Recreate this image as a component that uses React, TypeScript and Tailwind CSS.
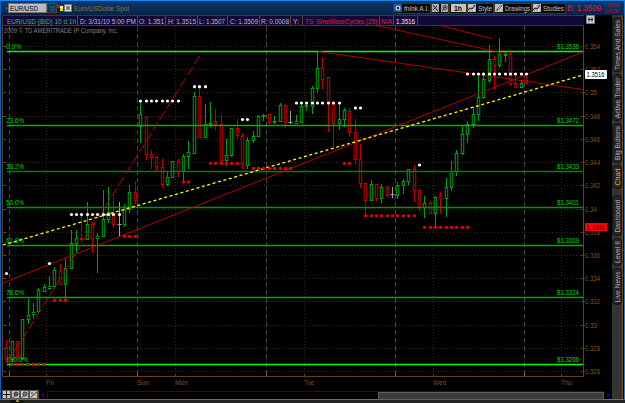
import type { ReactNode } from "react";
import clsx from "clsx";

type Kind = "g" | "r" | "w";

// kind, high, body top, body bottom, low
type Candle = [Kind, number, number, number, number];

const candles: Candle[] = [
  ["r", 340, 347, 359, 363],
  ["g", 341, 341, 359, 362],
  ["r", 341, 341, 357, 361],
  ["g", 319, 319, 358, 360],
  ["g", 299, 315, 319, 324],
  ["g", 303, 312, 314, 319],
  ["g", 288, 290, 311, 313],
  ["g", 284, 287, 291, 292],
  ["g", 276, 286, 288, 290],
  ["g", 267, 270, 286, 289],
  ["r", 264, 271, 284, 285],
  ["g", 258, 268, 284, 299],
  ["g", 230, 243, 268, 269],
  ["g", 230, 238, 243, 253],
  ["r", 216, 238, 239, 242],
  ["g", 202, 224, 239, 240],
  ["r", 222, 224, 238, 253],
  ["g", 233, 236, 238, 273],
  ["g", 190, 219, 236, 237],
  ["g", 187, 212, 219, 223],
  ["r", 197, 213, 224, 228],
  ["w", 202, 224, 224, 237],
  ["g", 204, 209, 224, 227],
  ["g", 185, 192, 209, 213],
  ["r", 181, 192, 200, 204],
  ["g", 102, 114, 126, 143],
  ["r", 117, 117, 154, 160],
  ["r", 150, 154, 157, 169],
  ["r", 156, 157, 166, 171],
  ["r", 159, 167, 184, 188],
  ["g", 171, 177, 184, 186],
  ["g", 161, 161, 177, 178],
  ["r", 159, 161, 171, 177],
  ["g", 154, 156, 171, 182],
  ["g", 141, 152, 156, 169],
  ["g", 92, 96, 153, 154],
  ["r", 87, 96, 137, 138],
  ["g", 104, 124, 137, 138],
  ["g", 102, 123, 124, 127],
  ["r", 109, 121, 124, 130],
  ["r", 115, 124, 160, 163],
  ["g", 139, 155, 160, 166],
  ["g", 128, 128, 155, 157],
  ["r", 119, 128, 135, 140],
  ["r", 133, 136, 163, 169],
  ["g", 137, 140, 165, 169],
  ["g", 131, 136, 140, 143],
  ["g", 115, 116, 136, 137],
  ["g", 114, 115, 116, 121],
  ["r", 114, 114, 122, 124],
  ["g", 116, 121, 122, 124],
  ["g", 103, 105, 121, 122],
  ["r", 104, 105, 122, 128],
  ["w", 111, 122, 122, 124],
  ["g", 115, 121, 123, 124],
  ["g", 104, 106, 122, 123],
  ["g", 102, 105, 106, 111],
  ["g", 86, 88, 106, 114],
  ["g", 51, 68, 88, 93],
  ["r", 58, 68, 79, 89],
  ["r", 77, 77, 103, 132],
  ["r", 103, 103, 123, 148],
  ["g", 103, 119, 123, 130],
  ["g", 108, 110, 119, 127],
  ["r", 108, 111, 132, 137],
  ["r", 119, 132, 159, 164],
  ["r", 144, 159, 183, 188],
  ["r", 183, 183, 200, 215],
  ["g", 180, 184, 200, 201],
  ["r", 184, 184, 198, 201],
  ["g", 184, 187, 198, 203],
  ["r", 186, 187, 195, 198],
  ["w", 187, 194, 194, 198],
  ["g", 182, 185, 195, 199],
  ["g", 179, 181, 185, 194],
  ["g", 169, 169, 181, 185],
  ["r", 165, 169, 190, 202],
  ["r", 189, 190, 207, 212],
  ["g", 196, 203, 207, 218],
  ["r", 201, 203, 213, 214],
  ["g", 196, 197, 213, 227],
  ["r", 192, 196, 198, 214],
  ["g", 178, 187, 198, 217],
  ["g", 161, 171, 187, 191],
  ["g", 150, 153, 171, 176],
  ["g", 125, 134, 153, 155],
  ["g", 121, 124, 134, 143],
  ["g", 107, 114, 124, 128],
  ["g", 74, 97, 114, 121],
  ["g", 76, 79, 97, 99],
  ["g", 45, 59, 80, 83],
  ["r", 56, 59, 65, 90],
  ["g", 38, 54, 65, 68],
  ["g", 52, 54, 55, 62],
  ["r", 52, 54, 83, 86],
  ["r", 76, 83, 87, 88],
  ["g", 80, 83, 87, 88],
  ["r", 76, 80, 82, 85],
];

// first candle, last candle, y
const whiteDots = [
  [0, 0, 273.5],
  [8, 8, 263.5],
  [12, 21, 214.5],
  [25, 32, 101],
  [35, 37, 86.7],
  [44, 45, 119.5],
  [54, 62, 103],
  [65, 66, 108],
  [77, 77, 165],
  [86, 97, 74],
];

const redDots = [
  [1, 7, 364.3],
  [9, 11, 300.3],
  [22, 24, 236.3],
  [33, 34, 182],
  [38, 43, 163.4],
  [46, 53, 168.4],
  [63, 64, 163.4],
  [67, 76, 215.8],
  [78, 86, 227.3],
];

const fibs = [
  { y: 51, pct: "0.0%", w: 15, price: "$1.3536", color: "#00ff00" },
  { y: 125, pct: "23.6%", w: 18, price: "$1.3472", color: "#00b400" },
  { y: 171, pct: "38.2%", w: 18, price: "$1.3433", color: "#008200" },
  { y: 207, pct: "50.0%", w: 18, price: "$1.3401", color: "#009600" },
  { y: 245, pct: "61.8%", w: 18, price: "$1.3369", color: "#00a800" },
  { y: 297, pct: "78.6%", w: 18, price: "$1.3324", color: "#00a800" },
  { y: 364, pct: "100.0%", w: 22, price: "$1.3266", color: "#00ff00" },
];

const prices = [
  "1.354", "1.352", "1.35", "1.348", "1.346", "1.344", "1.342", "1.34",
  "1.338", "1.336", "1.334", "1.332", "1.33", "1.328", "1.326",
];

const days = [
  { x: 46, label: "Fri", w: 8 },
  { x: 137, label: "Sun", w: 12 },
  { x: 175, label: "Mon", w: 13 },
  { x: 304, label: "Tue", w: 10 },
  { x: 433, label: "Wed", w: 13 },
  { x: 561, label: "Thu", w: 11 },
];

const quoteCells = [
  { text: "EUR/USD (BID) 10 d 1h", cls: "w-[75px] pl-1 text-[#30c040]", w: 69 },
  { text: "D: 3/31/10 5:00 PM", cls: "w-[60px] pl-0.5 text-[#bcb8c6]", w: 56 },
  { text: "O: 1.351", cls: "w-[28px] pl-px text-[#bcb8c6]", w: 25 },
  { text: "H: 1.3515", cls: "w-[32px] pl-0.5 text-[#bcb8c6]", w: 28 },
  { text: "L: 1.3507", cls: "w-[30px] pl-px text-[#bcb8c6]", w: 26 },
  { text: "C: 1.3509", cls: "w-[32px] pl-0.5 text-[#bcb8c6]", w: 28 },
  { text: "R: 0.0008", cls: "w-[31px] pl-px text-[#bcb8c6]", w: 28 },
  { text: "Y:", cls: "w-[12px] pl-0.5 text-[#bcb8c6]", w: 6 },
  { text: "TS_SineWaveCycles (25)", cls: "w-[77px] pl-0.5 text-[#e8182c]", w: 72 },
  { text: "N/A", cls: "w-[14px] pl-px text-[#e8182c]", w: 11 },
  { text: "1.3516", cls: "w-[24px] pl-0.5 text-[#f4f4fa]", w: 19 },
];

const sideTabs = [
  { label: "Times And Sales", cls: "h-[55px]", w: 50 },
  { label: "Active Trader", cls: "h-[47px]", w: 41 },
  { label: "Big Buttons", cls: "h-[40px]", w: 34 },
  { label: "Chart", cls: "h-[24px]", w: 17 },
  { label: "Dashboard", cls: "mt-1 h-[41px]", w: 33 },
  { label: "Level II", cls: "h-[28px]", w: 22 },
  { label: "Live News", cls: "h-[37px]", w: 31 },
];

const candleX = (i: number) => Math.floor(6.7 + i * 5.36);
const priceY = (i: number) => Math.round(46 + i * 23.22);

// Text squeezed or stretched to a fixed width, as the platform's bitmap font is
function Fit({ w, size = 8, children }: { w: number; size?: number; children: string }) {
  return (
    <svg width={w} height="10" className="shrink-0 overflow-visible">
      <text x="0" y="7.8" fontSize={size} textLength={w} lengthAdjust="spacingAndGlyphs" fill="currentColor">
        {children}
      </text>
    </svg>
  );
}

function ToolButton({ className, children }: { className?: string; children: ReactNode }) {
  return (
    <button
      className={clsx(
        "flex h-[11px] shrink-0 items-center gap-0.5 border border-[#4a3414] bg-[#080808] text-[#c0c0c0]",
        className
      )}
    >
      {children}
    </button>
  );
}

function PencilIcon() {
  return (
    <svg width="8" height="8" viewBox="0 0 8 8" className="shrink-0">
      <rect width="8" height="8" fill="#bdbdbd" />
      <path d="M1 7 L2 5 L6 1 L7 2 L3 6 Z" fill="#303030" />
      <path d="M3 5 L6 2" stroke="#f4f4f4" strokeWidth=".7" />
    </svg>
  );
}

function StudyIcon() {
  return (
    <svg width="8" height="8" viewBox="0 0 8 8" className="shrink-0">
      <rect width="8" height="8" fill="#b4b4b4" />
      <path d="M0 6 L2 4 L4 5 L7 1" stroke="#111" fill="none" />
      <path d="M1 2 H3 M5 6 H7" stroke="#fff" />
    </svg>
  );
}

function TitleBar() {
  return (
    <header className="flex h-[14px] items-center bg-linear-to-b from-[#083a72] to-[#052347] pl-1">
      <svg width="3" height="7">
        <path d="M1 1 L2.5 3.5 L1 6 Z" fill="#1e71bd" />
      </svg>
      <div className="flex h-[10px] w-[39px] items-center border border-[#7d7060] bg-[#bcbcbc] pl-px text-black">
        <Fit w={28}>EUR/USD</Fit>
      </div>
      <div className="flex h-[10px] w-[10px] items-center justify-center border border-[#5c3c14] bg-[#0b345f]">
        <svg width="7" height="7" fill="none" stroke="#2873b4">
          <path d="M1 1 L3.5 3 L6 1 M1 4 L3.5 6 L6 4" />
        </svg>
      </div>
      <svg width="6" height="8" className="shrink-0">
        <rect y="1" width="3" height="3" fill="#f00000" />
        <rect x="3" y="2" width="3" height="2" fill="#fff" />
        <rect x="1" y="4" width="3" height="3" fill="#111" />
        <rect x="3" y="4" width="3" height="3" fill="#f0dc00" />
      </svg>
      <svg width="8" height="8" className="ml-px mr-0.5 shrink-0">
        <rect x=".5" y=".5" width="7" height="7" fill="#ddd" stroke="#777" />
        <path d="M3 2 V6 M5 2 V6 M2 3 H6 M2 5 H6" stroke="#444" strokeWidth=".7" />
      </svg>
      <div className="text-[#94703c]">
        <Fit w={55}>Euro/USDollar Spot</Fit>
      </div>
      <div className="ml-[264px] flex shrink-0 items-center">
        <ToolButton className="w-[38px]">
          <svg width="8" height="8" className="shrink-0">
            <rect width="8" height="8" fill="#24549c" />
            <circle cx="4" cy="4" r="2.5" fill="#b8d2f2" />
            <circle cx="4" cy="4" r="1.2" fill="#102458" />
          </svg>
          <Fit w={25}>think A.I.</Fit>
        </ToolButton>
        <ToolButton className="w-[18px]">
          <svg width="16" height="8">
            <rect width="7" height="8" fill="#aaa" />
            <path d="M1 1 L6 7 M1 6 L5 2" stroke="#222" />
            <rect x="9" width="7" height="8" fill="#aaa" />
            <circle cx="13" cy="3.5" r="2" fill="none" stroke="#333" />
            <path d="M10 7 L12 5 M12 3.5 H14" stroke="#333" />
          </svg>
        </ToolButton>
        <ToolButton className="w-[18px] justify-center">
          <span className="flex h-[8px] w-[15px] items-center justify-center bg-[#c4c4c4] font-bold text-black">
            <Fit w={8}>1h</Fit>
          </span>
        </ToolButton>
        <ToolButton className="w-[27px]">
          <StudyIcon />
          <Fit w={14}>Style</Fit>
        </ToolButton>
        <ToolButton className="w-[38px]">
          <PencilIcon />
          <Fit w={25}>Drawings</Fit>
        </ToolButton>
        <ToolButton className="w-[34px]">
          <StudyIcon />
          <Fit w={21}>Studies</Fit>
        </ToolButton>
      </div>
      <div className="ml-px flex shrink-0 text-[#f01020]">
        <Fit w={34} size={9}>B: 1.3509</Fit>
        <svg width="17" height="11" className="ml-0.5" fill="#d01028" fontSize="5">
          <text x="2" y="4" textLength="14">-.0001</text>
          <text x="1" y="10" textLength="15">-0.01%</text>
        </svg>
      </div>
    </header>
  );
}

function QuoteBar() {
  return (
    <div className="flex h-[11px] shrink-0">
      <div className="flex w-[582px] border border-r-0 border-[#49351d] bg-[#12093a]">
        {quoteCells.map((cell) => (
          <div key={cell.text} className={clsx("flex shrink-0 border-r border-[#5b4632]", cell.cls)}>
            <Fit w={cell.w}>{cell.text}</Fit>
          </div>
        ))}
      </div>
      <svg width="10" height="9" className="ml-0.5">
        <rect x=".5" y=".5" width="8" height="8" fill="#ccc" stroke="#777" />
        <path d="M2 4.5 H7 M3 2.5 V6.5 M6 2.5 V6.5" stroke="#222" />
      </svg>
    </div>
  );
}

function Dots({ rows, color }: { rows: number[][]; color: string }) {
  return (
    <g fill={color}>
      {rows.flatMap(([from, to, y]) =>
        Array.from({ length: to - from + 1 }, (_, k) => (
          <circle key={`${from}-${k}`} cx={candleX(from + k) + 0.5} cy={y} r="1.6" />
        ))
      )}
    </g>
  );
}

function CandleShape({ candle, index }: { candle: Candle; index: number }) {
  const [kind, high, top, bottom, low] = candle;
  const x = candleX(index) + 0.5;
  if (kind === "w") {
    return <path d={`M${x} ${high} V${low} M${x - 2} ${top + 0.5} h4`} stroke="#a0a0a0" fill="none" />;
  }
  return (
    <g stroke={kind === "g" ? "#00a014" : "#c00000"} fill="none">
      <path d={`M${x} ${high} V${top} M${x} ${bottom} V${low}`} />
      <rect x={x - 1.25} y={top + 0.5} width="2.5" height={Math.max(bottom - top, 1)} />
    </g>
  );
}

function PriceChart() {
  return (
    <svg width="608" height="364" viewBox="2 26 608 364" className="block shrink-0" fontSize="8">
      {/* grid */}
      <g stroke="#342612" strokeDasharray="1 2">
        {prices.map((p, i) => (
          <path key={p} d={`M3 ${priceY(i) + 0.5} H583`} />
        ))}
        {days.filter((d) => d.label !== "Sun").map((d) => (
          <path key={d.label} d={`M${d.x + 0.5} 26 V376`} />
        ))}
      </g>
      <g stroke="#454545" strokeDasharray="5 3">
        {[9, 137, 266, 395, 524].map((x) => (
          <path key={x} d={`M${x + 0.5} 26 V376`} />
        ))}
      </g>

      {/* axes */}
      <g stroke="#65401a">
        <path d="M2.5 26 V376.5 H583.5 V26" fill="none" />
        {prices.map((p, i) => (
          <path key={p} d={`M3 ${priceY(i) + 0.5} h3 M581 ${priceY(i) + 0.5} h4`} />
        ))}
        {days.map((d) => (
          <path key={d.label} d={`M${d.x + 0.5} 374 v3`} />
        ))}
      </g>
      <g stroke="#666">
        {[9, 137, 266, 395, 524].map((x) => (
          <path key={x} d={`M${x + 0.5} 372 v4`} />
        ))}
      </g>
      <g fill="#80531f">
        {prices.map((p, i) => (
          <text key={p} x="585" y={priceY(i) + 3} textLength={p.length === 5 ? 15 : 12} lengthAdjust="spacingAndGlyphs">
            {p}
          </text>
        ))}
        {days.map((d) => (
          <text key={d.label} x={d.x} y="385" textLength={d.w} lengthAdjust="spacingAndGlyphs">
            {d.label}
          </text>
        ))}
      </g>

      <text x="4" y="33" fill="#808080" textLength="114" lengthAdjust="spacingAndGlyphs">
        2009 © TD AMERITRADE IP Company, Inc.
      </text>

      {candles.map((c, i) => (
        <CandleShape key={i} candle={c} index={i} />
      ))}

      {/* retracement levels */}
      {fibs.map((f) => (
        <g key={f.pct}>
          <path d={`M7 ${f.y + 0.5} H583`} stroke={f.color} strokeWidth="1.3" />
          <g fill="#00d800">
            <text x="6" y={f.y - 2} textLength={f.w} lengthAdjust="spacingAndGlyphs">{f.pct}</text>
            <text x="557" y={f.y - 2} textLength="22" lengthAdjust="spacingAndGlyphs">{f.price}</text>
          </g>
        </g>
      ))}

      {/* trend lines */}
      <g stroke="#b40000" fill="none">
        <path d="M8 362 L202 52" strokeDasharray="10 3" />
        <path d="M3 283 L583 52" />
        <path d="M374 25 L415 34 L512 55" />
        <path d="M438 25 L492 38.7" />
        <path d="M318 51.5 L583 89.5" />
      </g>
      <path d="M3 245 L583 75" stroke="#ffff00" strokeWidth="1.3" strokeDasharray="3 2.6" />

      <Dots rows={whiteDots} color="#fff" />
      <Dots rows={redDots} color="#f00000" />

      {/* price bubbles */}
      <rect x="585" y="70" width="22" height="9" rx="1" fill="#fff" />
      <text x="586.5" y="77.3" fill="#000" textLength="18" lengthAdjust="spacingAndGlyphs">1.3516</text>
      <rect x="585" y="223" width="22" height="8" fill="#ff0000" />
      <text x="586.5" y="229.8" fill="#400000" textLength="18" lengthAdjust="spacingAndGlyphs">1.3384</text>
    </svg>
  );
}

function BottomBar() {
  return (
    <div className="flex h-[9px] shrink-0 items-center">
      <svg width="37" height="9" className="shrink-0">
        <rect width="37" height="9" fill="#6a4417" />
        {[0.5, 9.5, 18.5, 27.5].map((x) => (
          <rect key={x} x={x} y=".5" width="8" height="8" fill="#c4c4c4" stroke="#555" />
        ))}
        <path d="M4.5 1 V8 M1 4.5 H8" stroke="#111" />
        <g stroke="#222" fill="none">
          <circle cx="14" cy="4" r="2" />
          <path d="M11 7.5 L12.5 6 M13 4 H15 M14 3 V5" />
          <circle cx="23" cy="4" r="2" />
          <path d="M20 7.5 L21.5 6 M22 4 H24" />
          <path d="M29 7 L35 2 M29 3 H31" />
        </g>
      </svg>
      <svg width="8" height="8" className="shrink-0">
        <path d="M5 1 L2 4 L5 7 Z" fill="#0000dc" />
      </svg>
      <div className="flex h-[8px] w-[557px] justify-end border-t border-l border-[#1a1a1a]">
        <div className="h-[8px] w-[226px] border border-[#606060] bg-[#3c3c3c]" />
      </div>
      <svg width="8" height="8" className="shrink-0">
        <path d="M3 1 L6 4 L3 7 Z" fill="#0000dc" />
      </svg>
    </div>
  );
}

function SideTabs() {
  return (
    <nav className="flex w-[11px] shrink-0 flex-col gap-0.5 border-r border-[#7a4c18] bg-[#343434] pt-0.5">
      {sideTabs.map((tab) => (
        <button
          key={tab.label}
          className={clsx(
            "flex w-[10px] shrink-0 items-center justify-center rounded-[4px] border border-[#151515] bg-[#242424]",
            tab.label === "Chart" ? "text-[#e8b018]" : "text-[#acacac]",
            tab.cls
          )}
        >
          <span className="flex -rotate-90">
            <Fit w={tab.w}>{tab.label}</Fit>
          </span>
        </button>
      ))}
    </nav>
  );
}

export default function App() {
  return (
    <div className="flex h-[403px] w-[625px] flex-col overflow-hidden bg-black font-['Liberation_Sans',Arial,sans-serif]">
      <div className="flex h-[400px] shrink-0 flex-col border border-[#1686e8] border-l-[#1262b4]">
        <TitleBar />
        <div className="flex min-h-0 flex-1">
          <div className="flex w-[611px] shrink-0 flex-col pl-px">
            <QuoteBar />
            <PriceChart />
            <BottomBar />
          </div>
          <SideTabs />
        </div>
      </div>
      <footer className="flex h-[3px] bg-[#242424] pl-[10px]">
        <div className="flex h-[3px] w-[14px] justify-center rounded-t-sm bg-[#111]">
          <span className="h-[2px] w-[3px] bg-[#a08010]" />
        </div>
      </footer>
    </div>
  );
}
